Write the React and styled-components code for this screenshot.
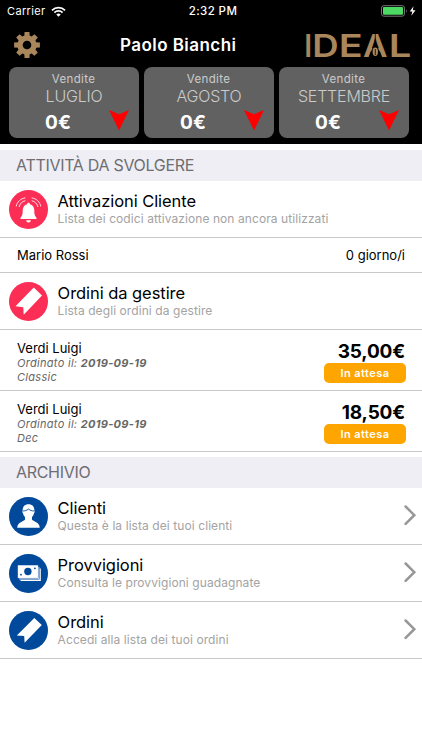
import React from "react";
import styled, { createGlobalStyle } from "styled-components";

const Global = createGlobalStyle`
  * { box-sizing: border-box; }
  html, body { margin: 0; background: #fff; }
  body { font-family: Inter, "Liberation Sans", sans-serif; color: #000; overflow: hidden; }
  svg { display: block; flex: none; }
`;

const Screen = styled.div`
  width: 422px;
  height: 750px;
  background: #fff;
  overflow: hidden;
`;

const Header = styled.header`
  height: 144px;
  background: #000;
  color: #fff;
`;

const StatusBar = styled.div`
  height: 22px;
  display: grid;
  grid-template-columns: 1fr auto 1fr;
  align-items: center;
  padding: 0 5px 0 7px;
  font-size: 11px;
  line-height: 22px;
`;

const Carrier = styled.div`
  display: flex;
  align-items: center;
  gap: 5px;
  letter-spacing: 0.35px;
`;

const Clock = styled.div`
  padding-left: 2px;
  font-weight: 500;
  font-size: 11.5px;
  letter-spacing: 0.4px;
`;

const Battery = styled.div`
  display: flex;
  justify-content: flex-end;
`;

const NavBar = styled.div`
  height: 44px;
  display: grid;
  grid-template-columns: 106px 118px 1fr;
  align-items: center;
  padding: 2px 11px 0 14px;
`;

const Title = styled.h1`
  margin: 0;
  font-size: 17px;
  font-weight: 600;
  letter-spacing: 0.45px;
  white-space: nowrap;
`;

const LogoSlot = styled.div`
  display: flex;
  justify-content: flex-end;
`;

const LogoSvg = styled.svg`
  overflow: visible;
`;

const Cards = styled.div`
  display: grid;
  grid-template-columns: repeat(3, 130px);
  gap: 5px;
  padding: 0.5px 9px 0;
`;

const Card = styled.div`
  height: 71.5px;
  border-radius: 8px;
  background: #616161;
  color: #cbcbcb;
  text-align: center;
  padding-top: 4px;
`;

const CardLabel = styled.div`
  padding-right: 1px;
  font-size: 11.5px;
  line-height: 16px;
  letter-spacing: 0.35px;
`;

const CardMonth = styled.div`
  font-size: 16px;
  line-height: 18px;
  font-weight: 300;
  letter-spacing: -0.2px;
`;

const CardBottom = styled.div`
  display: flex;
  justify-content: space-between;
  padding: 5px 10px 0 36px;
`;

const CardValue = styled.div`
  color: #fff;
  font-size: 19px;
  line-height: 25px;
  font-weight: 700;
  letter-spacing: 0.3px;
`;

const Band = styled.h2`
  margin: ${(p) => p.$top}px 0 0;
  height: 31px;
  padding-left: 16px;
  background: #efeef5;
  color: #6d6d72;
  font-size: 16px;
  font-weight: 400;
  line-height: 31px;
  letter-spacing: -0.3px;
`;

const MenuRow = styled.div`
  height: 57px;
  display: flex;
  align-items: center;
  padding: 0 5px 0 9px;
  border-bottom: 1px solid #c8c7cc;
`;

const Disc = styled.div`
  width: 39px;
  height: 39px;
  border-radius: 50%;
  background: ${(p) => p.$color};
`;

const MenuText = styled.div`
  flex: 1;
  padding-left: 9.6px;
`;

const MenuTitle = styled.div`
  font-size: 16.5px;
  line-height: 20px;
  letter-spacing: -0.06px;
`;

const MenuSub = styled.div`
  font-size: 12px;
  line-height: 16px;
  color: #a3a3a3;
  letter-spacing: 0.08px;
`;

const CustomerRow = styled.div`
  height: 35px;
  display: flex;
  align-items: center;
  justify-content: space-between;
  padding: 0 17px;
  border-bottom: 1px solid #c8c7cc;
  font-size: 13px;
`;

const OrderRow = styled.div`
  height: 61px;
  display: flex;
  justify-content: space-between;
  padding: 9.5px 17px 0;
  border-bottom: 1px solid #c8c7cc;
`;

const OrderName = styled.div`
  font-size: 13px;
  line-height: 16px;
`;

const OrderMeta = styled.div`
  font-size: 11px;
  line-height: 14px;
  font-style: italic;
  color: #666;
  letter-spacing: 0.3px;
`;

const OrderSide = styled.div`
  display: flex;
  flex-direction: column;
  align-items: flex-end;
  padding-top: 1px;
`;

const Price = styled.div`
  font-size: 19px;
  line-height: 21px;
  font-weight: 700;
  letter-spacing: -0.2px;
`;

const Badge = styled.div`
  width: 82px;
  height: 20px;
  margin: 1.5px -1px 0 0;
  border-radius: 5px;
  background: #ffa500;
  color: #fff;
  font-size: 11px;
  line-height: 20px;
  font-weight: 600;
  letter-spacing: 0.45px;
  text-align: center;
`;

const Wifi = () => (
  <svg width="15" height="11" viewBox="0 0 15 11" fill="none" stroke="#fff">
    <path d="M1 4.3a9.2 9.2 0 0 1 13 0" strokeWidth="1.8" />
    <path d="M3.4 6.6a5.8 5.8 0 0 1 8.2 0" strokeWidth="1.7" />
    <path d="M5.3 8.5a3.2 3.2 0 0 1 4.4 0L7.5 10.7z" fill="#fff" stroke="none" />
  </svg>
);

const BatteryIcon = () => (
  <svg width="36" height="12" viewBox="0 0 36 12">
    <rect x="0.5" y="0.7" width="23" height="10.5" rx="2.4" fill="none" stroke="#777" />
    <rect x="2" y="2.1" width="20" height="7.7" rx="1" fill="#4cd964" />
    <path d="M25 4.3v3.4c1-.4 1-3 0-3.4z" fill="#777" />
    <path d="M32.5 1.2L28.8 6.5h2.6L30.3 10.8L34.5 5.2h-2.7z" fill="#fff" />
  </svg>
);

const Gear = () => (
  <svg width="26" height="26" viewBox="-13 -13 26 26">
    <g fill="#a9865b">
      {[0, 45, 90, 135, 180, 225, 270, 315].map((a) => (
        <path key={a} d="M-2.8 -8L-2.4 -12.9H2.4L2.8 -8z" transform={`rotate(${a})`} />
      ))}
    </g>
    <circle r="7" fill="none" stroke="#a9865b" strokeWidth="5.4" />
  </svg>
);

const letters = [
  ["I", 304.3, 7.9],
  ["D", 312.3, 26.4],
  ["E", 338.7, 24],
  ["A", 363, 24.6],
  ["L", 388.8, 22.6],
];

const Logo = () => (
  <LogoSvg width="107" height="26" viewBox="304 33 107 26">
    <g fill="#a9865b" fontFamily="Inter" fontSize="31" fontWeight="600">
      {letters.map(([ch, x, w]) => (
        <text key={ch} x={x} y="57.5" textLength={w} lengthAdjust="spacingAndGlyphs">
          {ch}
        </text>
      ))}
    </g>
    <path d="M375.3 42.5L368.7 58H381.9z" fill="#000" />
    <path d="M375.3 34.5v9" stroke="#000" strokeWidth="0.8" />
    <ellipse cx="375.3" cy="52.700" rx="2.700" ry="4.200" fill="#a9865b" />
    <path d="M375.3 50v6" stroke="#000" strokeWidth="0.8" />
  </LogoSvg>
);

const DownArrow = () => (
  <svg width="20" height="21" viewBox="0 0 20 21">
    <path d="M0 0L10 4.3L20 0L10 20.5z" fill="#f00" />
  </svg>
);

const Chevron = () => (
  <svg width="14" height="22" viewBox="0 0 14 22">
    <path d="M2.6 1.5L11.3 10.2L2.6 18.9" fill="none" stroke="#979797" strokeWidth="2.5" strokeLinecap="round" />
  </svg>
);

const BellGlyph = () => (
  <svg width="39" height="39" viewBox="0 0 39 39">
    <path
      d="M19.500 12.800c1 0 1.400.6 1.400 1.500 3 .8 4.400 3 4.400 6.200 0 4 .4 5.200 2.200 7.200v1.300H11.500v-1.300c1.800-2 2.200-3.200 2.200-7.200 0-3.200 1.400-5.400 4.400-6.200 0-.9.400-1.500 1.400-1.500z"
      fill="#fff"
    />
    <path d="M17.200 30.200h4.600a2.300 2.200 0 0 1-4.600 0z" fill="#fff" />
    <g fill="none" stroke="#fff" strokeWidth="1" strokeLinecap="round" opacity="0.85">
      <path d="M16 7.900C11.500 8.600 8.200 11.700 7.300 16" />
      <path d="M16 10.800C13 11.400 10.900 13.600 10.200 16.600" />
      <path d="M23 7.900C27.500 8.600 30.800 11.700 31.700 16" />
      <path d="M23 10.800C26 11.400 28.100 13.600 28.800 16.600" />
    </g>
  </svg>
);

const TagGlyph = ({ large }) => (
  <svg width="39" height="39" viewBox="0 0 39 39">
    <path
      d={large ? "M24.8 5.5L33 13.5L14.7 32.8L14.3 25.2L6.5 24.3z" : "M25.3 7L32.8 13.9L15.6 31.8L15.2 25L7.8 24.5z"}
      fill="#fff"
    />
  </svg>
);

const PersonGlyph = () => (
  <svg width="39" height="39" viewBox="0 0 39 39">
    <path
      d="M19.5 7.2c4 0 6 2.6 5.8 6.3.6.3.5 2-.3 2.7-.4 1.7-1.1 2.9-2 3.800v2.800c1 1.700 7.500 2 7.800 8H8.200c.3-6 6.800-6.300 7.800-8V20c-.9-.9-1.600-2.100-2-3.800-.8-.7-.9-2.400-.3-2.700-.2-3.700 1.800-6.300 5.800-6.300z"
      fill="#fff"
    />
    <path d="M13.7 14c2.5 0 4-.6 5.8-1.9 1.8 1.3 3.3 1.9 5.8 1.9" fill="none" stroke="#01499a" strokeWidth="0.9" />
  </svg>
);

const CashGlyph = () => (
  <svg width="39" height="39" viewBox="0 0 39 39">
    <rect x="11.5" y="14.5" width="20.3" height="12.5" fill="#fff" />
    <rect x="10" y="12.8" width="20.6" height="12.9" fill="#fff" stroke="#01499a" strokeWidth="0.5" />
    <rect x="8.6" y="11" width="20.6" height="13.2" fill="#fff" stroke="#01499a" strokeWidth="0.5" />
    <circle cx="18.9" cy="17.5" r="3.7" fill="#01499a" />
    <circle cx="12" cy="20.7" r="0.9" fill="#01499a" />
    <circle cx="25.9" cy="14.3" r="0.9" fill="#01499a" />
  </svg>
);

const RED = "#fc2e55";
const BLUE = "#01499a";

const MenuItem = ({ color, glyph, title, sub, chevron }) => (
  <MenuRow>
    <Disc $color={color}>{glyph}</Disc>
    <MenuText>
      <MenuTitle>{title}</MenuTitle>
      <MenuSub>{sub}</MenuSub>
    </MenuText>
    {chevron && <Chevron />}
  </MenuRow>
);

const Order = ({ name, date, kind, price }) => (
  <OrderRow>
    <div>
      <OrderName>{name}</OrderName>
      <OrderMeta>
        Ordinato il: <b>{date}</b>
      </OrderMeta>
      <OrderMeta>{kind}</OrderMeta>
    </div>
    <OrderSide>
      <Price>{price}</Price>
      <Badge>In attesa</Badge>
    </OrderSide>
  </OrderRow>
);

export default function App() {
  return (
    <Screen>
      <Global />
      <Header>
        <StatusBar>
          <Carrier>
            Carrier <Wifi />
          </Carrier>
          <Clock>2:32 PM</Clock>
          <Battery>
            <BatteryIcon />
          </Battery>
        </StatusBar>
        <NavBar>
          <Gear />
          <Title>Paolo Bianchi</Title>
          <LogoSlot>
            <Logo />
          </LogoSlot>
        </NavBar>
        <Cards>
          {["LUGLIO", "AGOSTO", "SETTEMBRE"].map((m) => (
            <Card key={m}>
              <CardLabel>Vendite</CardLabel>
              <CardMonth>{m}</CardMonth>
              <CardBottom>
                <CardValue>0€</CardValue>
                <DownArrow />
              </CardBottom>
            </Card>
          ))}
        </Cards>
      </Header>
      <Band $top={6}>ATTIVITÀ DA SVOLGERE</Band>
      <MenuItem color={RED} glyph={<BellGlyph />} title="Attivazioni Cliente" sub="Lista dei codici attivazione non ancora utilizzati" />
      <CustomerRow>
        <span>Mario Rossi</span>
        <span>0 giorno/i</span>
      </CustomerRow>
      <MenuItem color={RED} glyph={<TagGlyph large />} title="Ordini da gestire" sub="Lista degli ordini da gestire" />
      <Order name="Verdi Luigi" date="2019-09-19" kind="Classic" price="35,00€" />
      <Order name="Verdi Luigi" date="2019-09-19" kind="Dec" price="18,50€" />
      <Band $top={5}>ARCHIVIO</Band>
      <MenuItem chevron color={BLUE} glyph={<PersonGlyph />} title="Clienti" sub="Questa è la lista dei tuoi clienti" />
      <MenuItem chevron color={BLUE} glyph={<CashGlyph />} title="Provvigioni" sub="Consulta le provvigioni guadagnate" />
      <MenuItem chevron color={BLUE} glyph={<TagGlyph />} title="Ordini" sub="Accedi alla lista dei tuoi ordini" />
    </Screen>
  );
}
